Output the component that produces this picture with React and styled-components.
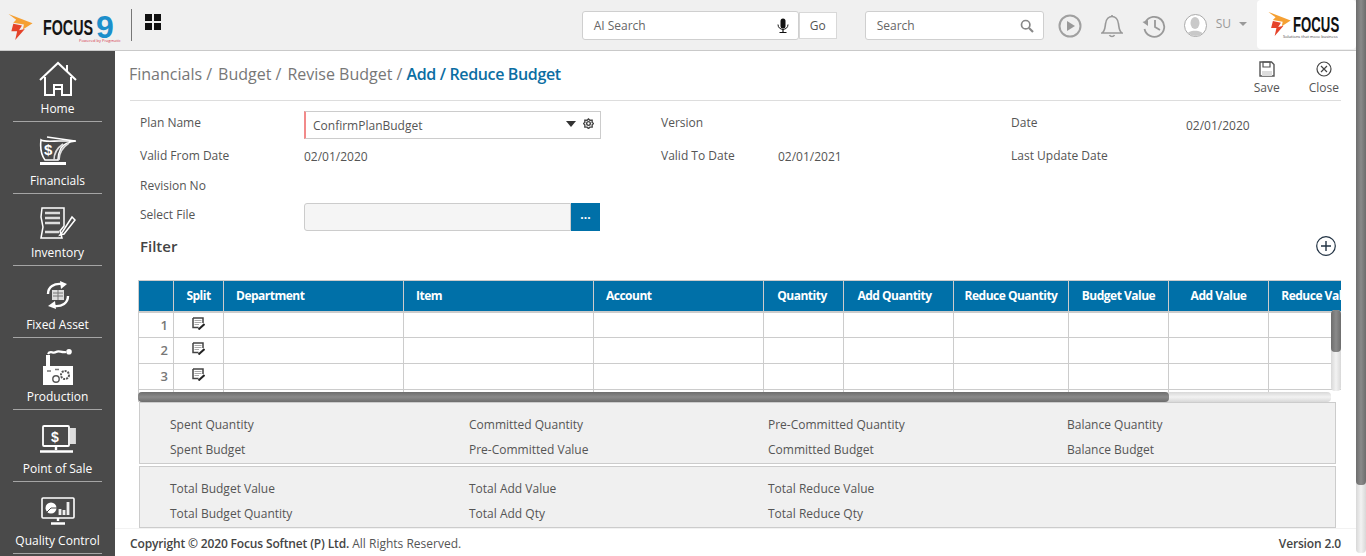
import React from "react";
import styled, { createGlobalStyle } from "styled-components";

const columns = [
  { label: "", width: 35 },
  { label: "Split", width: 50 },
  { label: "Department", width: 180, left: true },
  { label: "Item", width: 190, left: true },
  { label: "Account", width: 170, left: true },
  { label: "Quantity", width: 80, nudge: 3 },
  { label: "Add Quantity", width: 110, nudge: 8 },
  { label: "Reduce Quantity", width: 115 },
  { label: "Budget Value", width: 100 },
  { label: "Add Value", width: 100 },
  { label: "Reduce Value", width: 100 },
];

const summaryOne = [
  "Spent Quantity",
  "Committed Quantity",
  "Pre-Committed Quantity",
  "Balance Quantity",
  "Spent Budget",
  "Pre-Committed Value",
  "Committed Budget",
  "Balance Budget",
];

const summaryTwo = [
  "Total Budget Value",
  "Total Add Value",
  "Total Reduce Value",
  "",
  "Total Budget Quantity",
  "Total Add Qty",
  "Total Reduce Qty",
  "",
];

/* ===== icons ===== */

function FlameMark({ size = 26 }) {
  return (
    <FlameSvg width={size} height={size} viewBox="0 0 26 27">
      <path d="M0 0 L25 9.500 L15 16 L16 11 L5 9 L8 6 Z" fill="#f5a033" />
      <path d="M5 10 L14 12 L11 17 L17 15.500 L7 27 L9 18 L3 18 Z" fill="#e5432a" />
    </FlameSvg>
  );
}

const HomeIcon = () => (
  <svg width="38" height="36" viewBox="0 0 38 36" fill="none" stroke="#fff" strokeWidth="2">
    <path d="M1 19 L19 2 L37 19" />
    <path d="M28 10 V4" />
    <path d="M6 16 V34 H15 V24 H23 V34 H32 V16" />
    <path d="M16 28 H22" />
  </svg>
);

const FinancialsIcon = () => (
  <svg width="38" height="30" viewBox="0 0 38 30" fill="none" stroke="#fff" strokeWidth="1.600">
    <path d="M2 4 C5 6 14 5 20 5 L37 5 C28 6 24 9 22 12 C20 16 19 20 19 24 H6 C3 20 1 12 2 4 Z" />
    <path d="M8 1 L36 5" />
    <path d="M24 8 C18 12 15 18 15 24" stroke="#ddd" />
    <path d="M30 7 C24 11 20 17 20 24" stroke="#ddd" />
    <path d="M1 27.500 H27" strokeWidth="3" />
    <text x="5" y="19" fill="#fff" stroke="none" fontFamily="Liberation Sans" fontWeight="700" fontSize="15">$</text>
  </svg>
);

const InventoryIcon = () => (
  <svg width="38" height="32" viewBox="0 0 38 32" fill="none" stroke="#fff" strokeWidth="1.500">
    <path d="M3 1 H25 V19 L21 24 L23 31 H2 L4 20 L2 10 Z" />
    <path d="M6 6 H21 M6 11 H21 M6 16 H21 M6 25 H20" strokeWidth="2.400" stroke="#ddd" />
    <path d="M24 24 L21 28 L25 27 L36 13 L33 10 Z" fill="#4a4a4a" />
  </svg>
);

const FixedAssetIcon = () => (
  <svg width="26" height="28" viewBox="0 0 26 28" fill="none" stroke="#fff" strokeWidth="2.400">
    <path d="M3 13 C3 6 9 2 17 3" />
    <path d="M15 0 L22 3 L16 8 Z" fill="#fff" stroke="none" />
    <path d="M23 15 C23 22 17 26 9 25" />
    <path d="M11 28 L3 25 L10 20 Z" fill="#fff" stroke="none" />
    <path d="M7 9 H19 V19 H7 Z" fill="#ddd" stroke="none" />
    <path d="M13 9 V19 M8 12 H18 M8 15 H18" stroke="#777" strokeWidth="1" />
  </svg>
);

const ProductionIcon = () => (
  <svg width="32" height="36" viewBox="0 0 32 36" fill="none">
    <path d="M1 36 V17 H4 V6 H8 V17 H31 V36 Z" fill="#fff" />
    <path d="M6 5 C8 1 11 5 14 3 S19 4 24 3" stroke="#fff" strokeWidth="2.200" />
    <circle cx="27" cy="2.800" r="2.800" fill="#fff" />
    <circle cx="14" cy="30" r="3.200" stroke="#555" strokeWidth="1.400" />
    <circle cx="23" cy="26" r="4" stroke="#555" strokeWidth="2" strokeDasharray="2 1" />
    <path d="M5 22 H9 M13 20.500 H17" stroke="#777" strokeWidth="1.500" />
  </svg>
);

const PosIcon = () => (
  <svg width="37" height="28" viewBox="0 0 37 28" fill="none" stroke="#fff" strokeWidth="1.800">
    <rect x="4" y="1" width="26" height="20" rx="1" />
    <path d="M31 4 H36 V18 H31" fill="#ddd" stroke="#ddd" />
    <path d="M17 21 V25 M1 26.500 H34" strokeWidth="2.400" />
    <text x="12" y="17" fill="#fff" stroke="none" fontFamily="Liberation Sans" fontWeight="700" fontSize="14">$</text>
  </svg>
);

const QualityIcon = () => (
  <svg width="34" height="28" viewBox="0 0 34 28" fill="none" stroke="#fff" strokeWidth="1.600">
    <rect x="1" y="1" width="32" height="20" rx="1" />
    <circle cx="10" cy="11" r="5.500" fill="#fff" stroke="none" />
    <path d="M10 11 H16 M10 11 L6 15" stroke="#4a4a4a" strokeWidth="1" />
    <path d="M19 18 V12 M23 18 V13 M27 18 V5" strokeWidth="2.800" stroke="#eee" />
    <path d="M17 21 V24 M10 26.500 H24" strokeWidth="2.400" />
  </svg>
);

const navItems = [
  { label: "Home", icon: <HomeIcon /> },
  { label: "Financials", icon: <FinancialsIcon /> },
  { label: "Inventory", icon: <InventoryIcon /> },
  { label: "Fixed Asset", icon: <FixedAssetIcon /> },
  { label: "Production", icon: <ProductionIcon /> },
  { label: "Point of Sale", icon: <PosIcon /> },
  { label: "Quality Control", icon: <QualityIcon /> },
];

const NoteIcon = () => (
  <svg width="13" height="13" viewBox="0 0 13 13" fill="none">
    <path d="M1 1 H11 V6 M1 1 V10.500 H6.500" stroke="#444" strokeWidth="1.500" />
    <path d="M2.500 3.500 H9.500 M2.500 5.500 H9.500 M2.500 7.500 H7" stroke="#aaa" strokeWidth="1.200" />
    <path d="M6.500 12.500 L12.500 7" stroke="#222" strokeWidth="2" />
  </svg>
);

/* ===== page ===== */

export default function App() {
  return (
    <Page>
      <GlobalStyle />
      <Shell>
        <Header>
          <Brand>
            <FlameMark />
            <BrandWord>FOCUS</BrandWord>
            <BrandNine>9</BrandNine>
            <BrandSub>Powered by Pragmatic</BrandSub>
          </Brand>
          <HeaderRule />
          <AppGrid>
            <span />
            <span />
            <span />
            <span />
          </AppGrid>
          <Spacer />
          <AiBox>
            AI Search
            <svg width="12" height="16" viewBox="0 0 12 16" fill="none">
              <rect x="3.500" y="0.500" width="5" height="10" rx="2.500" fill="#111" />
              <path d="M1 6.500 C1 13 11 13 11 6.500" stroke="#111" />
              <path d="M6 11 V14 M2.500 14.500 H9.500" stroke="#111" strokeWidth="1.200" />
            </svg>
          </AiBox>
          <GoButton>Go</GoButton>
          <SearchBox>
            Search
            <svg width="14" height="14" viewBox="0 0 14 14" fill="none" stroke="#888" strokeWidth="1.700">
              <circle cx="5.700" cy="5.700" r="4.200" />
              <path d="M9 9 L13 13" strokeWidth="2.200" />
            </svg>
          </SearchBox>
          <HeaderIcons>
            <svg width="24" height="24" viewBox="0 0 24 24" fill="none" stroke="#a0a0a0" strokeWidth="2">
              <circle cx="12" cy="12" r="10.500" />
              <path d="M9 7 L17 12 L9 17 Z" fill="#999" stroke="none" />
            </svg>
            <svg width="22" height="24" viewBox="0 0 22 24" fill="none" stroke="#999" strokeWidth="1.600">
              <path d="M1 19 C4 17 4 13 4.500 10 C5 5 8 2.500 11 2.500 S17 5 17.500 10 C18 13 18 17 21 19 Z" />
              <path d="M11 1 V2.500 M8.500 21 C9.500 23 12.500 23 13.500 21" />
            </svg>
            <svg width="24" height="24" viewBox="0 0 24 24" fill="none" stroke="#999" strokeWidth="1.800">
              <path d="M3.500 8 A10 10 0 1 1 2.500 15" />
              <path d="M0.500 8 L6 6 L6 12 Z" fill="#999" stroke="none" />
              <path d="M13 6 V13 L18 16" />
            </svg>
          </HeaderIcons>
          <Avatar>
            <svg width="20" height="20" viewBox="0 0 20 20">
              <ellipse cx="10" cy="7" rx="4.500" ry="6" fill="#c9c9c9" />
              <path d="M1 20 C2 13 18 13 19 20 Z" fill="#c9c9c9" />
            </svg>
          </Avatar>
          <UserName>SU</UserName>
          <UserCaret />
          <LogoCard>
            <FlameMark size={24} />
            <LogoCopy>
              <LogoWord>FOCUS</LogoWord>
              <LogoTag>Solutions that move business</LogoTag>
            </LogoCopy>
          </LogoCard>
        </Header>

        <Body>
          <Sidebar>
            {navItems.map((item) => (
              <NavItem key={item.label}>
                <NavIcon>{item.icon}</NavIcon>
                <NavLabel>{item.label}</NavLabel>
              </NavItem>
            ))}
          </Sidebar>

          <Main>
            <Content>
              <TitleBar>
                <Crumbs>
                  <Crumb>Financials /</Crumb>
                  <Crumb>Budget /</Crumb>
                  <Crumb>Revise Budget /</Crumb>
                  <CrumbLast>Add / Reduce Budget</CrumbLast>
                </Crumbs>
                <ActionBar>
                  <Action>
                    <svg width="16" height="16" viewBox="0 0 16 16" fill="none">
                      <path d="M1 1 H12.500 L15 3.500 V15 H1 Z" stroke="#555" strokeWidth="1.400" />
                      <path d="M4 1 H11 V6 H4 Z" stroke="#555" strokeWidth="1.200" />
                      <path d="M3 10 H13 V15 H3 Z" fill="#ddd" />
                    </svg>
                    Save
                  </Action>
                  <Action>
                    <svg width="16" height="16" viewBox="0 0 16 16" fill="none" stroke="#444" strokeWidth="1.200">
                      <circle cx="8" cy="8" r="7" />
                      <path d="M5 5 L11 11 M11 5 L5 11" />
                    </svg>
                    Close
                  </Action>
                </ActionBar>
              </TitleBar>

              <FormGrid>
                <Label $lift={4}>Plan Name</Label>
                <PlanSelect>
                  <span>ConfirmPlanBudget</span>
                  <PlanTools>
                    <SelectCaret />
                    <svg width="11" height="11" viewBox="0 0 24 24" fill="none" stroke="#444" strokeWidth="3">
                      <circle cx="12" cy="12" r="4" />
                      <path d="M12 2 L15 5 L20 5 L20 10 L23 12 L20 15 L20 20 L15 20 L12 23 L9 20 L4 20 L4 15 L1 12 L4 10 L4 5 L9 5 Z" />
                    </svg>
                  </PlanTools>
                </PlanSelect>
                <Label $lift={4}>Version</Label>
                <Value />
                <Label $lift={4}>Date</Label>
                <Value $drop={2}>02/01/2020</Value>

                <Label $lift={1}>Valid From Date</Label>
                <Value $drop={1}>02/01/2020</Value>
                <Label $lift={1}>Valid To Date</Label>
                <Value $drop={1}>02/01/2021</Value>
                <Label $lift={1}>Last Update Date</Label>
                <Value />

                <Label>Revision No</Label>
                <Value />
                <Label />
                <Value />
                <Label />
                <Value />

                <Label $lift={6}>Select File</Label>
                <FilePicker>
                  <FileField />
                  <FileButton>···</FileButton>
                </FilePicker>
              </FormGrid>

              <FilterRow>
                <FilterTitle>Filter</FilterTitle>
                <svg width="20" height="20" viewBox="0 0 20 20" fill="none" stroke="#234" strokeWidth="1.200">
                  <circle cx="10" cy="10" r="9.300" />
                  <path d="M10 5 V15 M5 10 H15" strokeWidth="1.400" />
                </svg>
              </FilterRow>

              <TableFrame>
                <DataTable>
                  <colgroup>
                    {columns.map((col) => (
                      <col key={col.label} style={{ width: col.width }} />
                    ))}
                  </colgroup>
                  <thead>
                    <tr>
                      {columns.map((col) => (
                        <HeadCell key={col.label} $left={col.left} $nudge={col.nudge}>
                          {col.label}
                        </HeadCell>
                      ))}
                    </tr>
                  </thead>
                  <tbody>
                    {[1, 2, 3, null].map((row, i) => (
                      <tr key={i}>
                        <RowNumber>{row}</RowNumber>
                        <Cell>{row && <NoteIcon />}</Cell>
                        {columns.slice(2).map((col) => (
                          <Cell key={col.label} />
                        ))}
                      </tr>
                    ))}
                  </tbody>
                </DataTable>
                <VerticalTrack>
                  <VerticalThumb />
                </VerticalTrack>
                <HorizontalTrack>
                  <HorizontalThumb />
                </HorizontalTrack>
              </TableFrame>

              <SummaryPanel>
                {summaryOne.map((text) => (
                  <SummaryText key={text}>{text}</SummaryText>
                ))}
              </SummaryPanel>
              <SummaryPanel>
                {summaryTwo.map((text, i) => (
                  <SummaryText key={i}>{text}</SummaryText>
                ))}
              </SummaryPanel>
            </Content>

            <Footer>
              <span>
                <strong>Copyright © 2020 Focus Softnet (P) Ltd.</strong> All Rights Reserved.
              </span>
              <strong>Version 2.0</strong>
            </Footer>
          </Main>
        </Body>
      </Shell>
      <PageScroll>
        <PageScrollThumb />
      </PageScroll>
    </Page>
  );
}

/* ===== styles ===== */

const GlobalStyle = createGlobalStyle`
  html, body {
    margin: 0;
    height: 100%;
    overflow: hidden;
    background: #fff;
  }
  body {
    font-family: "Open Sans", "Liberation Sans", sans-serif;
    font-size: 12px;
    color: #555;
  }
  * {
    box-sizing: border-box;
  }
`;

const FlameSvg = styled.svg`
  flex: none;
`;

const Page = styled.div`
  display: flex;
  width: 1366px;
  height: 556px;
  overflow: hidden;
`;

const Shell = styled.div`
  display: flex;
  flex-direction: column;
  width: 1356px;
`;

const PageScroll = styled.div`
  width: 10px;
  height: 553px;
  background: linear-gradient(to right, #d8d8d8, #f2f2f2 50%, #d8d8d8);
  border-radius: 0 0 4px 4px;
`;

const PageScrollThumb = styled.div`
  height: 485px;
  background: linear-gradient(to right, #6d6d6d, #8a8a8a 50%, #6d6d6d);
  border-radius: 0 0 4px 4px;
`;

const Header = styled.header`
  display: flex;
  align-items: center;
  flex: none;
  height: 51px;
  padding-left: 8px;
  background: #f0f0f0;
  border-bottom: 1px solid #c9c9c9;
`;

const Brand = styled.div`
  position: relative;
  display: flex;
  align-items: flex-start;
  flex: none;
  align-self: flex-start;
  width: 115px;
  height: 27px;
  margin-top: 14px;
`;

const BrandWord = styled.div`
  width: 54px;
  margin: 2px 0 0 9px;
  font-family: "Liberation Sans", sans-serif;
  font-size: 22px;
  font-weight: 700;
  line-height: 24px;
  color: #151515;
  transform: scaleX(0.65);
  transform-origin: left center;
`;

const BrandNine = styled.div`
  margin: 1px 0 0 -1px;
  font-family: "Liberation Sans", sans-serif;
  font-size: 32px;
  font-weight: 700;
  line-height: 24px;
  color: #1c8fcb;
`;

const BrandSub = styled.span`
  position: absolute;
  top: 25px;
  left: 71px;
  font-size: 4px;
  line-height: 4px;
  color: #d5364a;
  white-space: nowrap;
`;

const HeaderRule = styled.div`
  flex: none;
  width: 1px;
  height: 32px;
  margin: 0 0 0 8px;
  background: #777;
`;

const AppGrid = styled.div`
  display: grid;
  grid-template-columns: 7px 7px;
  gap: 2px;
  margin: -6px 0 0 13px;
  span {
    height: 7px;
    background: #111;
  }
`;

const Spacer = styled.div`
  flex: 1;
`;

const AiBox = styled.div`
  display: flex;
  align-items: center;
  justify-content: space-between;
  flex: none;
  width: 217px;
  height: 29px;
  padding: 0 9px 0 11px;
  margin-top: 1px;
  background: #fff;
  border: 1px solid #cfcfcf;
  border-radius: 3px;
  color: #666;
`;

const GoButton = styled.div`
  display: flex;
  align-items: center;
  justify-content: center;
  flex: none;
  width: 38px;
  height: 27px;
  margin: 1px 28px 0 0;
  background: #fff;
  border: 1px solid #d8d8d8;
  color: #555;
`;

const SearchBox = styled(AiBox)`
  width: 179px;
  padding-right: 9px;
`;

const HeaderIcons = styled.div`
  display: flex;
  align-items: center;
  gap: 19px;
  margin: 1px 0 0 14px;
`;

const Avatar = styled.div`
  display: flex;
  align-items: flex-end;
  justify-content: center;
  flex: none;
  width: 23px;
  height: 23px;
  margin: 0 0 0 18px;
  overflow: hidden;
  background: #fff;
  border: 1px solid #aaa;
  border-radius: 50%;
`;

const UserName = styled.div`
  margin: -4px 0 0 9px;
  color: #999;
`;

const UserCaret = styled.div`
  width: 0;
  height: 0;
  margin: -2px 10px 0 8px;
  border-top: 4px solid #999;
  border-left: 4px solid transparent;
  border-right: 4px solid transparent;
`;

const LogoCard = styled.div`
  display: flex;
  align-items: flex-start;
  flex: none;
  gap: 1px;
  width: 99px;
  height: 49px;
  margin-bottom: 1px;
  padding: 12px 0 0 11px;
  background: #fff;
  border-radius: 4px;
`;

const LogoCopy = styled.div`
  display: flex;
  flex-direction: column;
`;

const LogoWord = styled.div`
  margin-top: 3px;
  font-family: "Liberation Sans", sans-serif;
  font-size: 22px;
  font-weight: 700;
  line-height: 20px;
  color: #111;
  transform: scaleX(0.6);
  transform-origin: left center;
`;

const LogoTag = styled.div`
  margin: -1px 0 0 -10px;
  font-size: 4px;
  line-height: 5px;
  color: #444;
  white-space: nowrap;
`;

const Body = styled.div`
  display: flex;
  flex: 1;
  min-height: 0;
`;

const Sidebar = styled.nav`
  flex: none;
  width: 115px;
  overflow: hidden;
  background: #4a4a4a;
`;

const NavItem = styled.div`
  display: flex;
  flex-direction: column;
  align-items: center;
  height: 72px;
  margin: 0 13px;
  border-bottom: 1px solid #a5a5a5;
  color: #fff;
  &:first-child {
    height: 71px;
  }
`;

const NavIcon = styled.div`
  display: flex;
  align-items: center;
  justify-content: center;
  flex: 1;
  padding-top: 6px;
`;

const NavLabel = styled.div`
  margin-bottom: 4px;
  font-size: 12px;
  line-height: 16px;
  white-space: nowrap;
`;

const Main = styled.main`
  display: flex;
  flex-direction: column;
  flex: 1;
  min-width: 0;
`;

const Content = styled.div`
  flex: 1;
  min-height: 0;
  width: 1226px;
  overflow: hidden;
  padding: 0 0 0 14px;
`;

const TitleBar = styled.div`
  display: flex;
  align-items: center;
  justify-content: space-between;
  height: 50px;
  margin-left: 1px;
  border-bottom: 1px solid #ddd;
`;

const Crumbs = styled.div`
  display: flex;
  align-items: baseline;
  gap: 6px;
  margin: -3px 0 0 -1px;
  font-size: 16px;
  color: #777;
`;

const Crumb = styled.span`
  white-space: nowrap;
`;

const CrumbLast = styled.span`
  margin-left: -2px;
  font-weight: 600;
  letter-spacing: -0.35px;
  color: #0b6ea3;
`;

const ActionBar = styled.div`
  display: flex;
  gap: 29px;
  margin-right: 2px;
`;

const Action = styled.div`
  display: flex;
  flex-direction: column;
  align-items: center;
  gap: 3px;
  margin-top: 5px;
  line-height: 16px;
  color: #555;
`;

const FormGrid = styled.div`
  display: grid;
  grid-template-columns: 164px 357px 117px 233px 175px 1fr;
  grid-template-rows: 31px 31px 29px 34px;
  align-items: center;
  padding: 8px 0 0 11px;
`;

const Label = styled.div`
  margin-top: ${(p) => (p.$lift ? -p.$lift : 0)}px;
  color: #555;
`;

const Value = styled.div`
  margin-top: ${(p) => p.$drop || 0}px;
  color: #555;
`;

const PlanSelect = styled.div`
  display: flex;
  align-items: center;
  justify-content: space-between;
  width: 297px;
  height: 28px;
  padding: 2px 6px 0 7px;
  background: #fff;
  border: 1px solid #ccc;
  border-left: 2px solid #f28a8a;
`;

const PlanTools = styled.div`
  display: flex;
  align-items: center;
  gap: 7px;
  margin-top: -4px;
`;

const SelectCaret = styled.div`
  width: 0;
  height: 0;
  border-top: 6px solid #333;
  border-left: 5.500px solid transparent;
  border-right: 5.500px solid transparent;
`;

const FilePicker = styled.div`
  display: flex;
  width: 296px;
  height: 28px;
`;

const FileField = styled.div`
  flex: 1;
  background: #f5f5f5;
  border: 1px solid #ccc;
  border-radius: 3px 0 0 3px;
`;

const FileButton = styled.div`
  display: flex;
  align-items: center;
  justify-content: center;
  width: 29px;
  background: #0070a8;
  color: #fff;
  font-size: 12px;
  font-weight: 700;
`;

const FilterRow = styled.div`
  display: flex;
  align-items: center;
  justify-content: space-between;
  height: 24px;
  padding: 0 5px 0 11px;
`;

const FilterTitle = styled.div`
  font-size: 15px;
  font-weight: 600;
  color: #444;
`;

const TableFrame = styled.div`
  position: relative;
  height: 122px;
  margin: 22px 0 0 9px;
  overflow: hidden;
`;

const DataTable = styled.table`
  width: 1230px;
  table-layout: fixed;
  border-collapse: collapse;
`;

const HeadCell = styled.th`
  height: 31px;
  padding: 0 ${(p) => (p.$nudge ? `${p.$nudge}px` : p.$left ? "12px" : "0")} 1px ${(p) => (p.$left ? "12px" : "0")};
  background: #0070a8;
  border: 1px solid #ccc;
  border-bottom-width: 2px;
  color: #fff;
  font-size: 12px;
  font-weight: 700;
  letter-spacing: -0.5px;
  text-align: ${(p) => (p.$left ? "left" : "center")};
  white-space: nowrap;
  overflow: hidden;
`;

const Cell = styled.td`
  height: 26px;
  padding: 0;
  border: 1px solid #ccc;
  text-align: center;
  vertical-align: top;
  svg {
    margin-top: 4px;
  }
`;

const RowNumber = styled(Cell)`
  padding: 3px 5px 0 0;
  font-size: 13px;
  font-weight: 600;
  color: #777;
  text-align: right;
`;

const VerticalTrack = styled.div`
  position: absolute;
  top: 30px;
  right: 0;
  width: 10px;
  height: 81px;
  background: linear-gradient(to right, #d8d8d8, #f2f2f2 50%, #d8d8d8);
  border-radius: 4px;
`;

const VerticalThumb = styled.div`
  width: 10px;
  height: 42px;
  background: linear-gradient(to right, #6d6d6d, #8a8a8a 50%, #6d6d6d);
  border-radius: 4px;
`;

const HorizontalTrack = styled.div`
  position: absolute;
  left: 0;
  bottom: 0;
  width: 1193px;
  height: 10px;
  background: linear-gradient(#d8d8d8, #f2f2f2 50%, #d8d8d8);
  border-radius: 4px;
`;

const HorizontalThumb = styled.div`
  width: 1031px;
  height: 10px;
  background: linear-gradient(#6d6d6d, #8a8a8a 50%, #6d6d6d);
  border-radius: 4px;
`;

const SummaryPanel = styled.div`
  display: grid;
  grid-template-columns: repeat(4, 299px);
  grid-auto-rows: 25px;
  align-items: center;
  width: 1197px;
  height: 62px;
  margin: 0 0 2px 10px;
  padding: 9px 0 0 30px;
  background: #f0f0f0;
  border: 1px solid #ccc;
`;

const SummaryText = styled.div`
  color: #555;
`;

const Footer = styled.footer`
  display: flex;
  align-items: center;
  justify-content: space-between;
  flex: none;
  height: 28px;
  padding: 2px 15px 0 15px;
  background: #fff;
  border-top: 1px solid #f2f2f2;
  color: #555;
  strong {
    font-weight: 600;
    letter-spacing: -0.15px;
    color: #444;
  }
`;
